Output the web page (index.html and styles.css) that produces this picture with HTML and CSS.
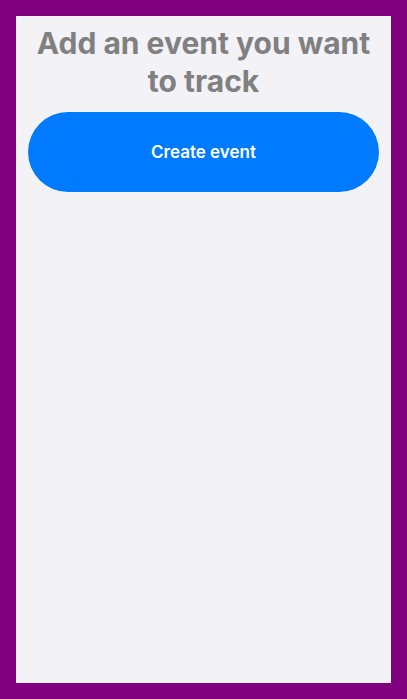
FILE: index.html
```html
<!DOCTYPE html>
<html lang="en">
<head>
<meta charset="utf-8">
<title>Track events</title>
<link rel="stylesheet" href="styles.css">
</head>
<body>
<div class="screen">
  <h1 class="title">Add an event you want to track</h1>
  <button class="create-btn" type="button">Create event</button>
</div>
</body>
</html>
```
FILE: styles.css
```css
html, body {
  margin: 0;
  padding: 0;
}
body {
  background: #800080;
  padding: 16px;
  font-family: Inter, "Noto Sans", sans-serif;
}
.screen {
  width: 375px;
  height: 667px;
  background: #f2f2f7;
  box-sizing: border-box;
  padding: 8px 12px 0;
  display: flex;
  flex-direction: column;
}
.title {
  margin: 0;
  font-size: 30px;
  line-height: 38px;
  font-weight: 700;
  color: #808080;
  text-align: center;
}
.create-btn {
  margin-top: 12px;
  height: 80px;
  border: none;
  border-radius: 40px;
  background: #007aff;
  color: #ffffff;
  font-family: Inter, "Noto Sans", sans-serif;
  font-size: 17px;
  font-weight: 600;
  cursor: pointer;
}
```
